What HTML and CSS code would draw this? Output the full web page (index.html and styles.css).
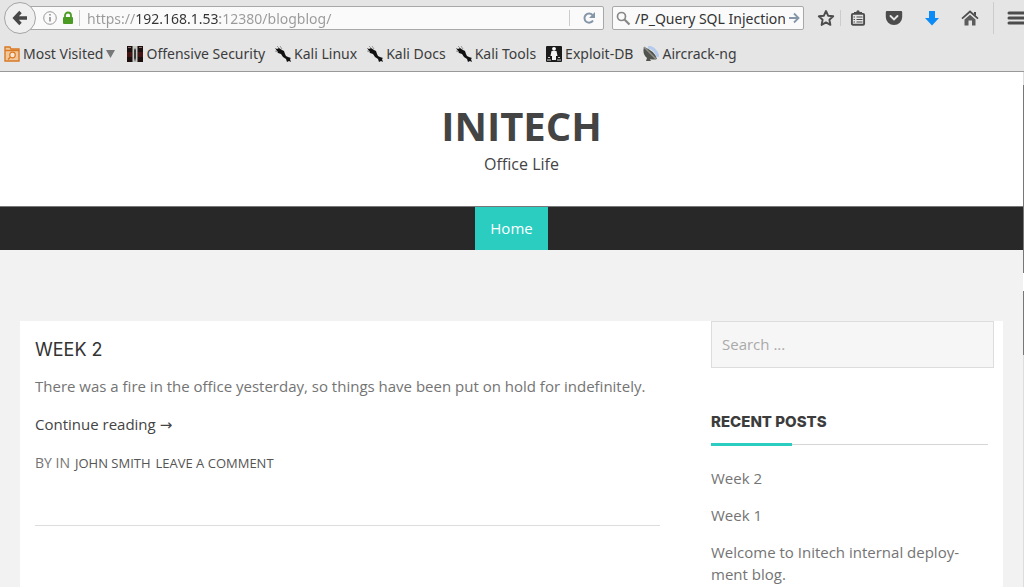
FILE: index.html
```html
<!DOCTYPE html>
<html lang="en">
<head>
    <meta charset="UTF-8">
    <meta name="viewport" content="width=device-width, initial-scale=1.0">
    <title>Initech</title>
    <link rel="stylesheet" href="styles.css">
</head>
<body>

    <!-- Shared bookmark icon -->
    <svg class="sprite" aria-hidden="true">
        <symbol id="kali" viewBox="0 0 16 16">
            <path d="M0 2l2 1 2-1 3 2 2 1 1 3 1 2 2 1 3 1-1 1 1 3-2-1-2 1-1-3-3-2-2-3-3-1-1-2z" fill="#111"/>
            <path d="M2 0l2 2M5 0l2 3M0 5l3 1" stroke="#999"/>
        </symbol>
    </svg>

    <div class="browser">
        <!-- Toolbar -->
        <div class="toolbar">
            <button class="back-btn" aria-label="Back">
                <svg width="16" height="16" viewBox="0 0 16 16"><path d="M8.500 2L2.800 8l5.700 6M3 8h12" fill="none" stroke="#474747" stroke-width="3.400"/></svg>
            </button>
            <div class="url-bar">
                <svg width="14" height="14" viewBox="0 0 14 14"><circle cx="7" cy="7" r="6.300" fill="none" stroke="#999"/><path d="M7 6v4.500M7 3v1.600" stroke="#888" stroke-width="1.500"/></svg>
                <svg width="12" height="14" viewBox="0 0 12 14"><path d="M3 7V4.500a3 3 0 0 1 6 0V7" fill="none" stroke="#4b9b25" stroke-width="1.800"/><rect x="1" y="6" width="10" height="7" rx="1" fill="#4b9b25"/></svg>
                <span class="line"></span>
                <input type="text" class="url" aria-label="Address" value="https://192.168.1.53:12380/blogblog/">
                <span class="line"></span>
                <button class="reload" aria-label="Reload">
                    <svg width="14" height="14" viewBox="0 0 14 14"><path d="M11 9.500A4.600 4.600 0 1 1 10.500 4" fill="none" stroke="#8496a8" stroke-width="2"/><path d="M13 1v6H7z" fill="#8496a8"/></svg>
                </button>
            </div>
            <div class="search-bar">
                <svg width="15" height="15" viewBox="0 0 15 15"><circle cx="5.500" cy="5.500" r="4" fill="none" stroke="#888" stroke-width="1.700"/><path d="M8.500 8.500l5 5" stroke="#888" stroke-width="2.200"/></svg>
                <input type="text" class="query" aria-label="Web search" value="/P_Query SQL Injection">
                <button class="go" aria-label="Go">
                    <svg width="11" height="12" viewBox="0 0 11 12"><path d="M0 6h9M5 1.500L9.500 6 5 10.500" fill="none" stroke="#8496a8" stroke-width="1.800"/></svg>
                </button>
            </div>
            <div class="tools">
                <button class="star" aria-label="Bookmark this page">
                    <svg width="18" height="18" viewBox="0 0 18 18"><path d="M9 2l2.100 4.700 5.100.6-3.800 3.500 1 5.100L9 13.400l-4.400 2.500 1-5.100L1.800 7.300l5.100-.6z" fill="none" stroke="#4c4c4c" stroke-width="1.900" stroke-linejoin="round"/></svg>
                </button>
                <span class="line"></span>
                <button class="list" aria-label="Bookmarks">
                    <svg width="16" height="18" viewBox="0 0 16 18"><rect x="1.900" y="4.900" width="12.200" height="10.800" rx="1" fill="none" stroke="#4c4c4c" stroke-width="1.900"/><path d="M4 5V3h2.300a1.700 1.700 0 0 1 3.400 0H12v2z" fill="#4c4c4c"/><path d="M3.500 8H5M6.500 8h6M3.500 10.500H5M6.500 10.500h6M3.500 13H5M6.500 13h6" stroke="#4c4c4c" stroke-width="1.200"/></svg>
                </button>
                <button aria-label="Pocket">
                    <svg width="18" height="16" viewBox="0 0 18 16"><path d="M2 1h14q1.200 0 1.200 1.200V7a8.200 8 0 0 1-16.400 0V2.200Q.8 1 2 1z" fill="#4c4c4c"/><path d="M5.500 6L9 9.500 12.500 6" fill="none" stroke="#e5e5e5" stroke-width="1.900" stroke-linecap="round"/></svg>
                </button>
                <button aria-label="Downloads">
                    <svg width="16" height="16" viewBox="0 0 16 16"><path d="M5 1h6v7h4l-7 7.500L1 8h4z" fill="#0c8af5"/></svg>
                </button>
                <button aria-label="Home">
                    <svg width="18" height="16" viewBox="0 0 18 16"><path d="M1 8.700L9 1.500l8 7.200" fill="none" stroke="#4c4c4c" stroke-width="1.700"/><path d="M13 2h2v4l-2-2z" fill="#4c4c4c"/><path d="M3.500 9.500L9 4.700l5.500 4.800v6H11v-5H7.500v5h-4z" fill="#5c5c5c"/></svg>
                </button>
                <span class="line tall"></span>
                <button class="menu" aria-label="Menu">
                    <svg width="17" height="14" viewBox="0 0 17 14"><path d="M2 2h16M2 7h16M2 12h16" stroke="#4c4c4c" stroke-width="3" stroke-linecap="round"/></svg>
                </button>
            </div>
        </div>

        <!-- Bookmarks -->
        <nav class="bookmarks" aria-label="Bookmarks">
            <a href="#" class="folder">
                <svg width="16" height="16" viewBox="0 0 16 16"><path d="M1 15V1h5l1 2h8v12z" fill="#f3c79c" stroke="#d97a26" stroke-width="1.400"/><path d="M1 4.500h14" stroke="#d97a26" stroke-width="1.500"/><circle cx="8.500" cy="9" r="2.800" fill="#fbe6d2" stroke="#d97a26" stroke-width="1.200"/><path d="M6.500 11L4 13.500" stroke="#d97a26" stroke-width="1.500"/></svg>
                Most Visited
                <svg width="9" height="8" viewBox="0 0 9 8"><path d="M0 0h9L4.500 8z" fill="#777"/></svg>
            </a>
            <a href="#">
                <svg width="16" height="16" viewBox="0 0 16 16"><path d="M0 0h16v16H0z" fill="#1c0f0f"/><path d="M0 6h5v5H0zM11 6h5v5h-5z" fill="#431414"/><path d="M1 1.500h3M12 1.500h3" stroke="#8a6a6a"/><path d="M5.500 0h5v16h-5z" fill="#c9cbc8"/><path d="M8 2l1 2v8l-1 4-1-4V4z" fill="#3a3a3a"/></svg>
                Offensive Security
            </a>
            <a href="#"><svg width="16" height="16"><use href="#kali"/></svg>Kali Linux</a>
            <a href="#"><svg width="16" height="16"><use href="#kali"/></svg>Kali Docs</a>
            <a href="#"><svg width="16" height="16"><use href="#kali"/></svg>Kali Tools</a>
            <a href="#">
                <svg width="16" height="16" viewBox="0 0 16 16"><rect width="16" height="16" rx="1" fill="#1b1b1b"/><circle cx="8" cy="2.800" r="1.900" fill="#fff"/><path d="M5.500 5h5l1 5h-1.500v4h-4v-4H4.500z" fill="#f4f4f4"/><path d="M1 14h4M11 14h4M2 11.500h2M12 11.500h2" stroke="#ccc"/></svg>
                Exploit-DB
            </a>
            <a href="#">
                <svg width="16" height="16" viewBox="0 0 16 16"><path d="M5 1q8 1 10 10" fill="none" stroke="#b4cbed" stroke-width="3"/><path d="M1 1Q-1 8 4 12l-1 3h5l-1-2q4 1 7 0Q12 5 1 1z" fill="#51544e"/><path d="M1 1l12 12" stroke="#8e9089" stroke-width="1.500"/></svg>
                Aircrack-ng
            </a>
        </nav>
    </div>

    <div class="viewport">
        <div class="site">
            <header class="site-header">
                <h1>INITECH</h1>
                <p>Office Life</p>
            </header>

            <nav class="main-nav" aria-label="Main">
                <a href="#">Home</a>
            </nav>

            <div class="container">
                <main class="posts">
                    <article class="post">
                        <h2>WEEK 2</h2>
                        <p>There was a fire in the office yesterday, so things have been put on hold for indefinitely.</p>
                        <p><a href="#">Continue reading <span class="arrow">→</span></a></p>
                        <footer>BY IN <a href="#">JOHN SMITH</a> <a href="#">LEAVE A COMMENT</a></footer>
                    </article>
                </main>

                <aside class="sidebar">
                    <input type="search" class="site-search" aria-label="Search" placeholder="Search ...">
                    <section class="widget">
                        <h3>RECENT POSTS</h3>
                        <div class="rule"></div>
                        <ul>
                            <li><a href="#">Week 2</a></li>
                            <li><a href="#">Week 1</a></li>
                            <li><a href="#">Welcome to Initech internal deploy&shy;ment blog.</a></li>
                        </ul>
                    </section>
                </aside>
            </div>
        </div>
        <div class="edge"></div>
    </div>

</body>
</html>
```

FILE: styles.css
```css
* {
    box-sizing: border-box;
}

body {
    margin: 0;
    height: 100vh;
    overflow: hidden;
    display: flex;
    flex-direction: column;
    font-family: "Open Sans", sans-serif;
    font-size: 15px;
    color: #747474;
    background-color: #f2f2f2;
}

a {
    color: inherit;
    text-decoration: none;
}

h1, h2, h3, p, ul {
    margin: 0;
    padding: 0;
}

svg {
    flex: none;
}

.sprite {
    position: absolute;
    width: 0;
    height: 0;
}

/* Browser bars */
.browser {
    flex: none;
    background-color: #e5e5e5;
    border-bottom: 1px solid #999;
    font-family: "Noto Sans", sans-serif;
    font-size: 14px;
    color: #3c3c3c;
}

.browser button {
    display: flex;
    align-items: center;
    justify-content: center;
    padding: 0;
    border: none;
    background: none;
}

.browser input {
    min-width: 0;
    flex: 1;
    padding: 0;
    border: none;
    outline: none;
    background-color: transparent;
    font: inherit;
    color: #333;
}

.toolbar {
    display: flex;
    align-items: center;
    height: 36px;
    padding-left: 4px;
}

.browser .back-btn {
    flex: none;
    width: 32px;
    height: 32px;
    border: 1px solid #a5a5a5;
    border-radius: 50%;
    background-color: #efefef;
    z-index: 1;
}

.url-bar,
.search-bar {
    display: flex;
    align-items: center;
    height: 24px;
    border: 1px solid #a8a8a8;
    border-radius: 2px;
    background-color: #fafafa;
}

.url-bar {
    flex: 1;
    gap: 5px;
    margin-left: -10px;
    padding-left: 16px;
}

.line {
    flex: none;
    width: 1px;
    height: 16px;
    background-color: #ccc;
}

.tall {
    height: 32px;
    margin: 0 4px;
}

/* Host part of the address is darker than the rest */
.browser .url {
    margin-left: 2px;
    background-image: linear-gradient(to right, #999 48px, #333 48px, #333 133px, #999 133px);
    background-clip: text;
    -webkit-text-fill-color: transparent;
}

.reload {
    width: 28px;
}

.search-bar {
    width: 192px;
    gap: 4px;
    margin-left: 8px;
    padding: 0 3px;
}

.tools {
    display: flex;
    align-items: center;
    margin-left: 8px;
}

.browser .tools button {
    width: 38px;
}

.browser .tools .star {
    width: 28px;
}

.browser .tools .list {
    width: 34px;
}

.browser .tools .menu {
    width: 26px;
    justify-content: flex-end;
}

.bookmarks {
    display: flex;
    align-items: center;
    gap: 10px;
    height: 35px;
    padding-left: 4px;
    white-space: nowrap;
}

.bookmarks a {
    display: flex;
    align-items: center;
    gap: 3px;
}

.bookmarks .folder {
    margin-right: 2px;
}

/* Page */
.viewport {
    flex: 1;
    display: flex;
    min-height: 0;
}

.site {
    flex: 1;
    display: flex;
    flex-direction: column;
}

.edge {
    width: 1px;
    background: linear-gradient(#ddd 13px, #777 13px, #777 201px, #fff 201px, #fff 219px, #777 219px, #777 283px, #ddd 283px);
}

.site-header {
    padding: 28px 0 30px 20px;
    background-color: #fff;
    text-align: center;
    color: #444;
}

.site-header h1 {
    font-size: 40px;
    line-height: 52px;
}

.site-header p {
    font-size: 16px;
    line-height: 24px;
}

.main-nav {
    display: flex;
    justify-content: center;
    border-top: 1px solid #777;
    background-color: #282828;
}

.main-nav a {
    padding: 0 15px;
    line-height: 43px;
    background-color: #2bcdc1;
    color: #fff;
}

.container {
    flex: 1;
    display: flex;
    gap: 51px;
    margin: 71px 20px 0;
    padding: 0 9px 0 15px;
    background-color: #fff;
}

.posts {
    flex: 1;
}

.post {
    padding: 18px 0 51px;
    border-bottom: 1px solid #ddd;
}

.post h2 {
    margin-bottom: 14px;
    font-family: Inter, sans-serif;
    font-size: 18px;
    font-weight: 400;
    line-height: 22px;
    color: #333;
}

.post p {
    margin-bottom: 16px;
    line-height: 22px;
}

.post p a {
    color: #444;
}

.arrow {
    font-family: "DejaVu Sans", sans-serif;
}

.post footer {
    display: flex;
    align-items: baseline;
    gap: 5px;
    font-size: 14px;
    line-height: 22px;
}

.post footer a {
    font-size: 13px;
    color: #555;
}

.sidebar {
    width: 283px;
}

.site-search {
    display: block;
    width: 100%;
    height: 47px;
    padding: 0 10px 2px;
    border: 1px solid #ddd;
    background-color: #f6f6f6;
    font-family: inherit;
    font-size: 15px;
}

.site-search::placeholder {
    color: #aaa;
}

.widget {
    margin: 43px 6px 0 0;
}

.widget h3 {
    margin-bottom: 10px;
    font-family: Inter, sans-serif;
    font-size: 15px;
    font-weight: 800;
    line-height: 22px;
    color: #3c3c3c;
}

.rule {
    height: 3px;
    background: linear-gradient(to right, #2bcdc1 81px, transparent 81px), linear-gradient(#fff 1px, #d5d5d5 1px, #d5d5d5 2px, #fff 2px);
}

.widget ul {
    margin-top: 21px;
    list-style: none;
}

.widget li {
    margin-bottom: 15px;
    line-height: 22px;
}
```
